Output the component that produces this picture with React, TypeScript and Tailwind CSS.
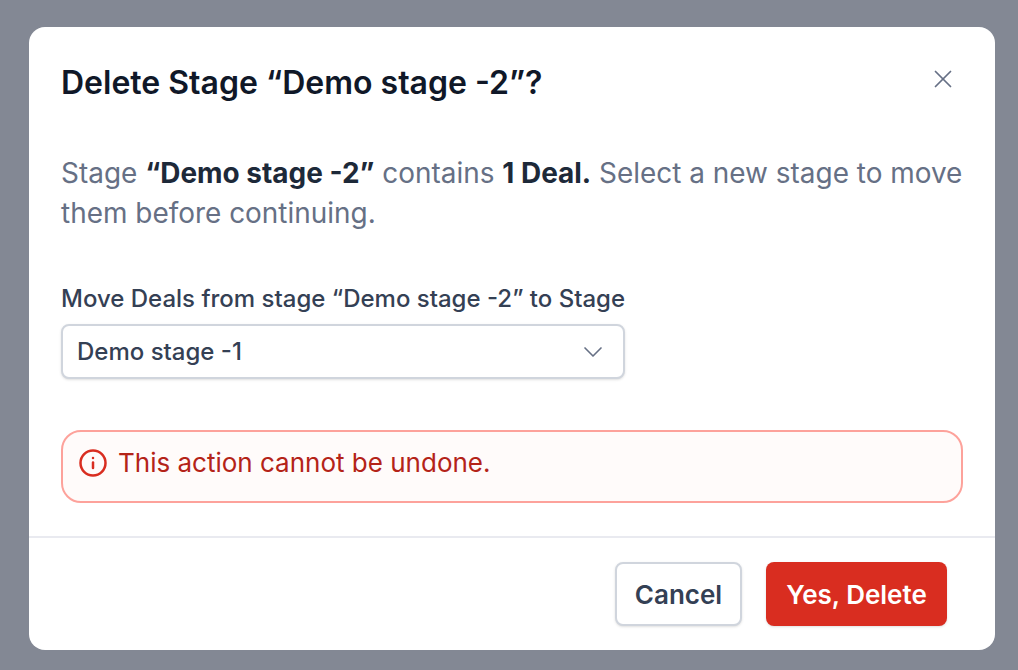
import { ChevronDown, X } from 'lucide-react';

const App = () => {
  return (
    <div className="h-[670px] w-full overflow-hidden bg-[#838894] pl-[29px] pt-[27px] font-['Inter',sans-serif]">
      <div className="flex h-[623px] w-[966px] flex-col rounded-[16px] bg-white">
        {/* Header */}
        <div className="flex items-center justify-between pl-[32px] pr-[37px] pt-[37px]">
          <h2 className="text-[32px] leading-[38px] font-semibold text-[#101828]">
            Delete Stage “Demo stage -2”?
          </h2>
          <X className="-mt-[8px] h-[30px] w-[30px] text-[#667085]" strokeWidth={1.4} />
        </div>

        {/* Body */}
        <div className="flex-1 px-[32px] pt-[51px]">
          <p className="-mr-[4px] text-[27.94px] leading-[40px] text-[#667085]">
            Stage <span className="font-bold text-[#1d2939]">“Demo stage -2”</span> contains{' '}
            <span className="font-bold text-[#1d2939]">1 Deal.</span> Select a new stage to move them
            before continuing.
          </p>

          <label className="mt-[50px] block text-[24px] leading-[32px] font-medium text-[#344054]">
            Move Deals from stage “Demo stage -2” to Stage
          </label>
          <div className="mt-[9px] flex h-[55px] w-[564px] items-center justify-between rounded-[8px] border-2 border-[#d0d5dd] bg-white pl-[14px] pr-[14px] shadow-sm">
            <span className="text-[24px] font-medium text-[#344054]">Demo stage -1</span>
            <ChevronDown className="h-[32px] w-[32px] text-[#667085]" strokeWidth={1.25} />
          </div>

          <div className="mt-[51px] flex h-[73px] items-center gap-[10px] rounded-[20px] border-2 border-[#fda29b] bg-[#fffbfa] pl-[15px] pb-[8px]">
            <svg className="h-[30px] w-[30px] text-[#d92d20]" viewBox="0 0 24 24" fill="none" stroke="currentColor" strokeWidth="2" strokeLinecap="round">
              <circle cx="12" cy="12" r="10" />
              <path d="M12 16v-4.5" />
              <path d="M12 8h.01" />
            </svg>
            <span className="text-[26px] text-[#b42318]">This action cannot be undone.</span>
          </div>
        </div>

        {/* Footer */}
        <div className="flex items-center justify-end gap-[24px] border-t-2 border-[#e9eaf0] pt-[24px] pb-[24px] pr-[48px]">
          <button className="flex h-[64px] w-[127px] items-center justify-center rounded-[8px] border-2 border-[#d0d5dd] bg-white text-[26px] font-semibold text-[#344054] shadow-sm">
            Cancel
          </button>
          <button className="flex h-[64px] w-[181px] items-center justify-center rounded-[8px] bg-[#d92d20] text-[26px] font-semibold text-white shadow-sm">
            Yes, Delete
          </button>
        </div>
      </div>
    </div>
  );
};

export default App;
